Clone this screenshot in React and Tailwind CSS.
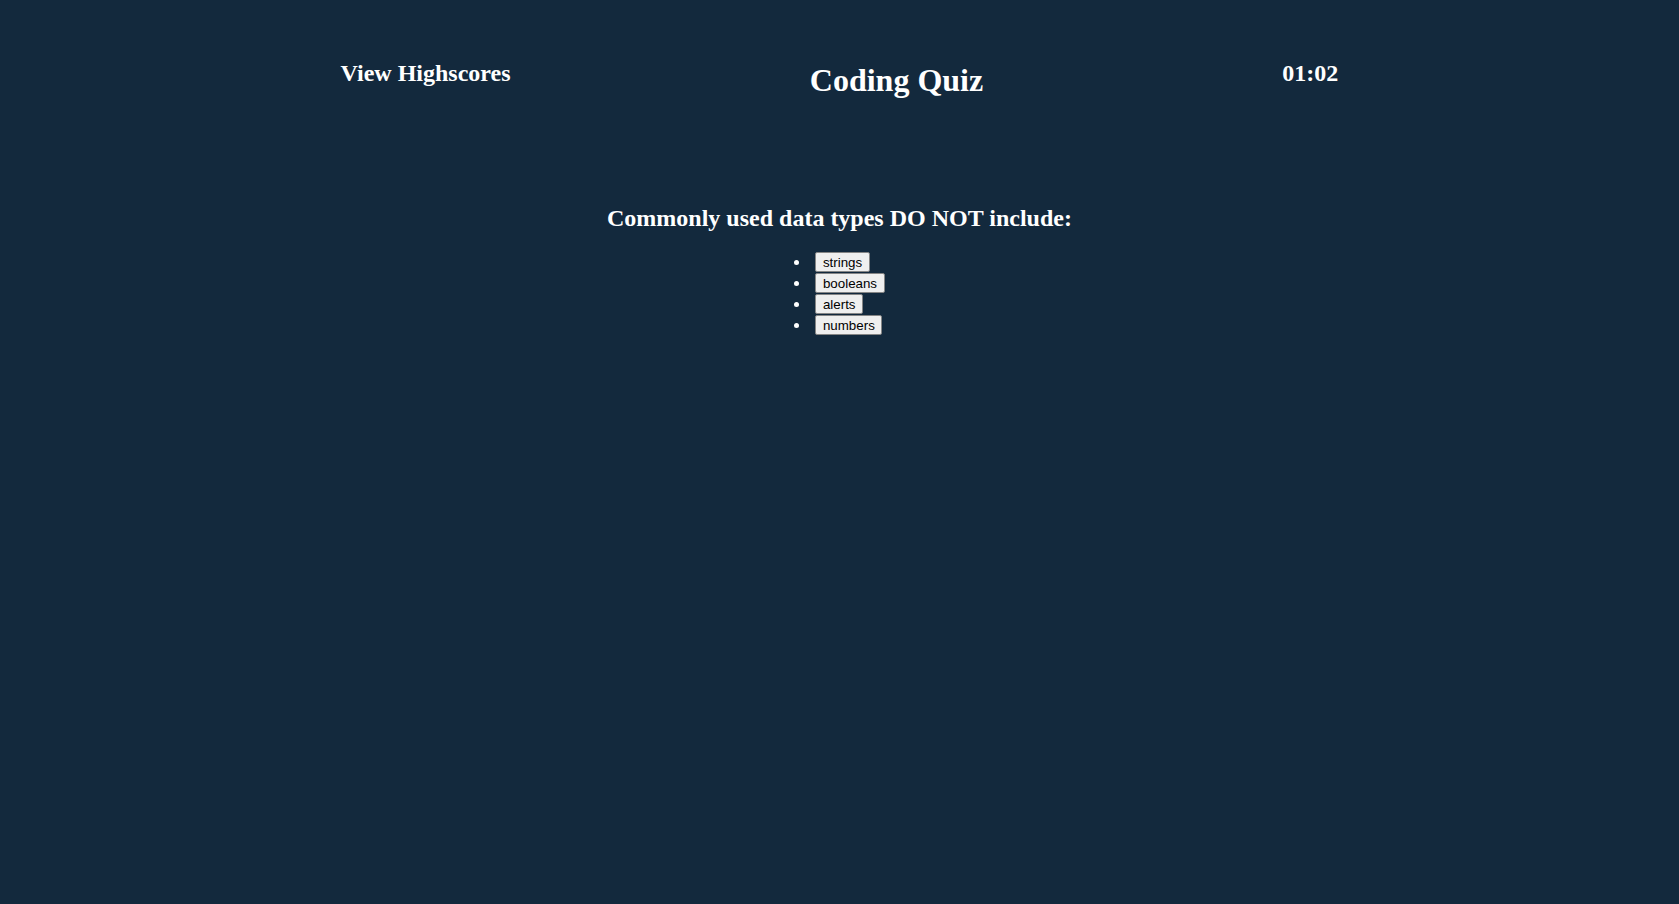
import React, { useState } from "react";

const choices = ["strings", "booleans", "alerts", "numbers"];

const App = () => {
  const [time] = useState("01:02");

  return (
    <div className="min-h-screen w-full bg-[#13293d] text-white font-['Liberation_Serif','Times_New_Roman',serif]">
      {/* Header */}
      <header className="mx-auto flex w-[1297px] items-start justify-around pt-[59px]">
        <h2 className="text-[24px] font-bold leading-[28px]">View Highscores</h2>
        <h1 className="mt-[3px] text-[32px] font-bold leading-[37px]">Coding Quiz</h1>
        <h2 className="text-[24px] font-bold leading-[28px]">{time}</h2>
      </header>

      {/* Question */}
      <main className="flex flex-col items-center">
        <h2 className="mt-[105px] text-[24px] font-bold leading-[28px]">
          Commonly used data types DO NOT include:
        </h2>

        <ul className="mx-auto mt-[20px] flex w-fit flex-col gap-[1px]">
          {choices.map((c) => (
            <li key={c} className="flex h-[20px] items-center gap-[16px]">
              <span className="h-[5px] w-[5px] rounded-full bg-white" />
              <button className="h-[20px] rounded-[2px] border border-[#858585] bg-[#efefef] px-[6.5px] font-['Liberation_Sans',Arial,sans-serif] text-[13.33px] leading-[normal] text-black">
                {c}
              </button>
            </li>
          ))}
        </ul>
      </main>
    </div>
  );
};

export default App;
